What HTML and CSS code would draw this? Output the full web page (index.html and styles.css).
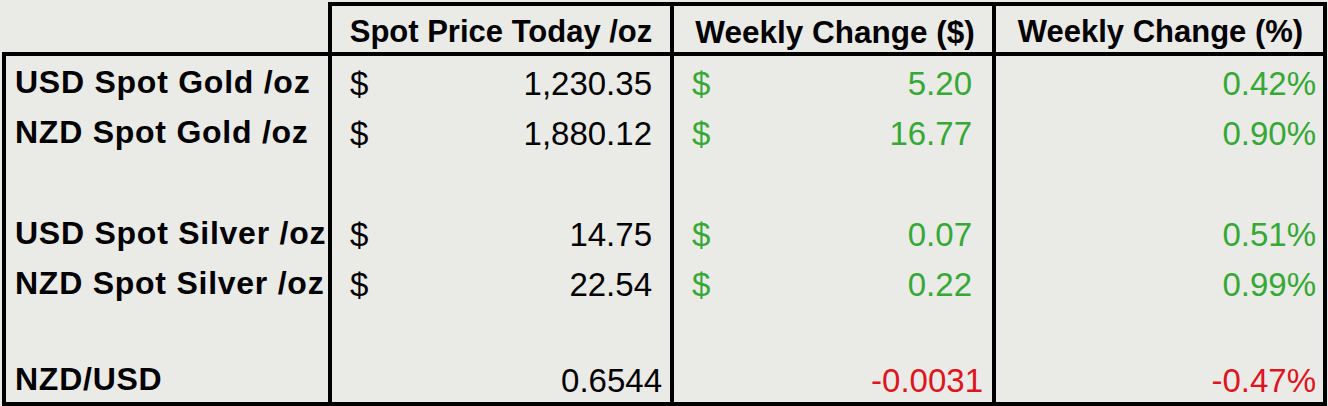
FILE: index.html
```html
<!DOCTYPE html>
<html>
<head>
<meta charset="utf-8">
<link rel="stylesheet" href="styles.css">
</head>
<body>
<div class="sheet">
  <div class="cell corner"></div>
  <div class="cell head c2">Spot Price Today /oz</div>
  <div class="cell head c3">Weekly Change ($)</div>
  <div class="cell head c4">Weekly Change (%)</div>

  <div class="cell label r1">USD Spot Gold /oz</div>
  <div class="cell num c2 r1"><span>$</span><span class="acct">1,230.35</span></div>
  <div class="cell num c3 r1 up"><span>$</span><span class="acct">5.20</span></div>
  <div class="cell num c4 r1 up"><span></span><span>0.42%</span></div>

  <div class="cell label r2">NZD Spot Gold /oz</div>
  <div class="cell num c2 r2"><span>$</span><span class="acct">1,880.12</span></div>
  <div class="cell num c3 r2 up"><span>$</span><span class="acct">16.77</span></div>
  <div class="cell num c4 r2 up"><span></span><span>0.90%</span></div>

  <div class="cell label r3"></div>
  <div class="cell num c2 r3"></div>
  <div class="cell num c3 r3"></div>
  <div class="cell num c4 r3"></div>

  <div class="cell label r4">USD Spot Silver /oz</div>
  <div class="cell num c2 r4"><span>$</span><span class="acct">14.75</span></div>
  <div class="cell num c3 r4 up"><span>$</span><span class="acct">0.07</span></div>
  <div class="cell num c4 r4 up"><span></span><span>0.51%</span></div>

  <div class="cell label r5">NZD Spot Silver /oz</div>
  <div class="cell num c2 r5"><span>$</span><span class="acct">22.54</span></div>
  <div class="cell num c3 r5 up"><span>$</span><span class="acct">0.22</span></div>
  <div class="cell num c4 r5 up"><span></span><span>0.99%</span></div>

  <div class="cell label r6"></div>
  <div class="cell num c2 r6"></div>
  <div class="cell num c3 r6"></div>
  <div class="cell num c4 r6"></div>

  <div class="cell label r7 last">NZD/USD</div>
  <div class="cell num c2 r7 last"><span></span><span>0.6544</span></div>
  <div class="cell num c3 r7 last down"><span></span><span>-0.0031</span></div>
  <div class="cell num c4 r7 last down"><span></span><span>-0.47%</span></div>
</div>
</body>
</html>
```

FILE: styles.css
```css
html, body {
  margin: 0;
  padding: 0;
  background: #eaeae6;
}

body {
  width: 1328px;
  height: 406px;
  overflow: hidden;
  font-family: "Liberation Sans", Arial, sans-serif;
  color: #000;
}

.sheet {
  display: grid;
  grid-template-columns: 326px 342px 322px 335px;
  grid-template-rows: 54px 50px 50px 51px 50px 50px 46px 53px;
  margin: 2px 0 0 2px;
  width: 1325px;
}

.cell {
  box-sizing: border-box;
  white-space: nowrap;
}

.corner {
  border-bottom: 4px solid #000;
}

.head {
  border-top: 4px solid #000;
  border-bottom: 4px solid #000;
  border-left: 4px solid #000;
  font-weight: bold;
  font-size: 31px;
  display: flex;
  align-items: center;
  justify-content: center;
  padding-top: 6px;
}

.head.c3 {
  font-size: 31.5px;
  padding-left: 4px;
}

.head.c4 {
  border-right: 4px solid #000;
  padding-left: 2px;
}

.label {
  border-left: 4px solid #000;
  font-weight: bold;
  font-size: 32px;
  letter-spacing: 0.75px;
  padding-left: 9px;
  display: flex;
  align-items: center;
  padding-top: 3px;
}

.num {
  border-left: 4px solid #000;
  font-size: 33px;
  display: flex;
  align-items: center;
  justify-content: space-between;
  padding-top: 6px;
}

.num.c2 {
  padding-left: 18px;
  padding-right: 8px;
}

.num.c3 {
  padding-left: 18px;
  padding-right: 9px;
}

.num.c4 {
  border-right: 4px solid #000;
  padding-right: 7px;
}

.acct {
  padding-right: 10px;
}

.c3 .acct {
  padding-right: 11px;
}

.last {
  border-bottom: 4px solid #000;
}

.up {
  color: #35a835;
}

.down {
  color: #dc1520;
}
```
